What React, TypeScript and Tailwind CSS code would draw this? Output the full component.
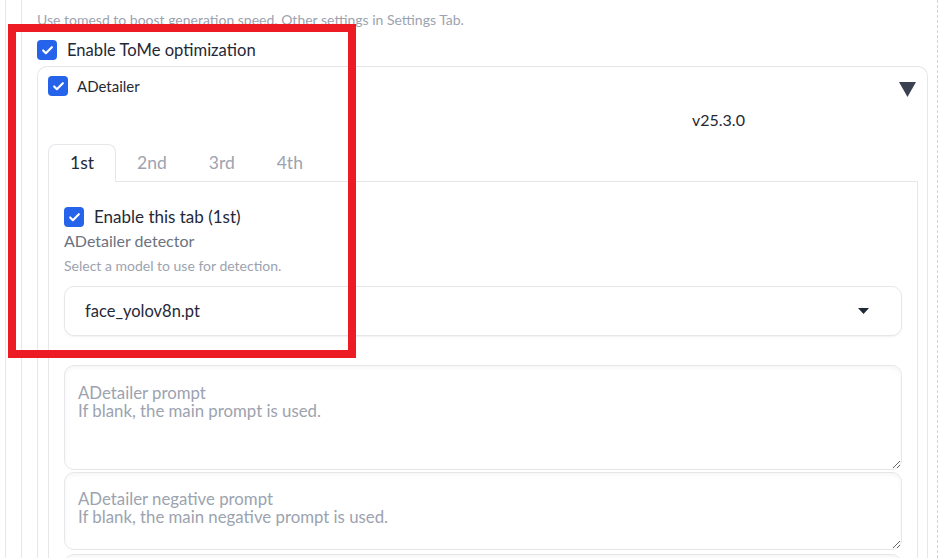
import { Check } from 'lucide-react'

const FONT = { fontFamily: 'Lato, "Noto Sans", sans-serif' }

function Box({ size = 20 }: { size?: number }) {
  return (
    <span
      className="flex shrink-0 items-center justify-center rounded-[4px] bg-[#2563eb]"
      style={{ width: size, height: size }}
    >
      <Check size={13} strokeWidth={4} className="text-white" />
    </span>
  )
}

const TABS = ['1st', '2nd', '3rd', '4th']

export default function App() {
  return (
    <div className="relative h-[558px] w-[947px] overflow-hidden bg-white" style={FONT}>
      <div className="h-full w-[938px] border-r border-dashed border-[#d1d5db]">
        <div className="ml-[5px] h-full border-l border-[#e5e7eb]">
          <div className="ml-[15px] h-full border-l border-[#e5e7eb] pl-[15px] pr-[9px]">
            <p className="pt-[10px] text-[14px] leading-[20px] text-[#9ca3af]">
              Use tomesd to boost generation speed. Other settings in Settings Tab.
            </p>

            <label className="mt-[10px] flex h-[20px] items-center gap-[10px]">
              <Box />
              <span className="text-[16.6px] text-[#1f2937]">Enable ToMe optimization</span>
            </label>

            <div className="mt-[6px] rounded-t-[10px] border border-b-0 border-[#e5e7eb] pb-[20px] pl-[10px] pr-[9px] pt-[9px]">
              <div className="flex items-start">
                <label className="flex h-[20px] items-center gap-[9px]">
                  <Box />
                  <span className="text-[15px] text-[#1f2937]">ADetailer</span>
                </label>
                <svg width="17" height="15" viewBox="0 0 17 15" className="ml-auto mr-[2px] mt-[6px]">
                  <polygon points="0,0 17,0 8.5,15" fill="#3a4150" />
                </svg>
              </div>

              <p className="mt-[11px] pl-[644px] text-[16px] leading-[24px] text-[#1f2937]">v25.3.0</p>

              <div className="mt-[12px] flex h-[38px] border-b border-[#e5e7eb]">
                {TABS.map((t, i) => (
                  <div
                    key={t}
                    className={
                      i === 0
                        ? '-mb-px flex h-[38px] items-center rounded-t-[8px] border border-b-0 border-[#e5e7eb] bg-white px-[21px] text-[17.5px] text-[#1f2937]'
                        : 'flex h-[38px] items-center px-[21px] text-[17.5px] text-[#9ca3af]'
                    }
                  >
                    {t}
                  </div>
                ))}
              </div>

              <div className="border border-t-0 border-[#e5e7eb] px-[15px] pb-[20px] pt-[25px]">
                <label className="flex h-[20px] items-center gap-[10px]">
                  <Box />
                  <span className="text-[17px] text-[#1f2937]">Enable this tab (1st)</span>
                </label>
                <p className="mt-[3px] text-[16px] leading-[22px] text-[#6b7280]">ADetailer detector</p>
                <p className="mt-[4px] text-[14px] leading-[20px] text-[#9ca3af]">
                  Select a model to use for detection.
                </p>

                <div className="mt-[10px] flex h-[50px] items-center rounded-[10px] border border-[#e5e7eb] pl-[20px] pr-[32px] shadow-[0_1px_2px_rgba(0,0,0,0.06)]">
                  <span className="text-[16.5px] text-[#1f2937]">face_yolov8n.pt</span>
                  <svg width="11" height="6" viewBox="0 0 11 6" className="ml-auto">
                    <polygon points="0,0 11,0 5.5,6" fill="#1f2937" />
                  </svg>
                </div>

                <textarea
                  className="mt-[29px] block h-[105px] w-full rounded-[10px] border border-[#e5e7eb] px-[13px] pt-[18px] text-[16.8px] leading-[17.5px] shadow-[inset_0_2px_4px_rgba(0,0,0,0.04)] outline-none placeholder:text-[#9ca3af]"
                  placeholder={'ADetailer prompt\nIf blank, the main prompt is used.'}
                />
                <textarea
                  className="mt-[2px] block h-[78px] w-full rounded-[10px] border border-[#e5e7eb] px-[13px] pt-[17px] text-[16.8px] leading-[17.5px] shadow-[inset_0_2px_4px_rgba(0,0,0,0.04)] outline-none placeholder:text-[#9ca3af]"
                  placeholder={'ADetailer negative prompt\nIf blank, the main negative prompt is used.'}
                />
                <textarea
                  className="mt-[4px] block h-[80px] w-full rounded-[10px] border border-[#e5e7eb] px-[13px] pt-[16px] text-[16.8px] leading-[17.5px] shadow-[inset_0_2px_4px_rgba(0,0,0,0.04)] outline-none placeholder:text-[#9ca3af]"
                />
              </div>
            </div>
          </div>
        </div>
      </div>

      <div className="pointer-events-none absolute left-[8px] top-[24px] h-[334px] w-[348px] border-8 border-[#ed1c24]" />
    </div>
  )
}
